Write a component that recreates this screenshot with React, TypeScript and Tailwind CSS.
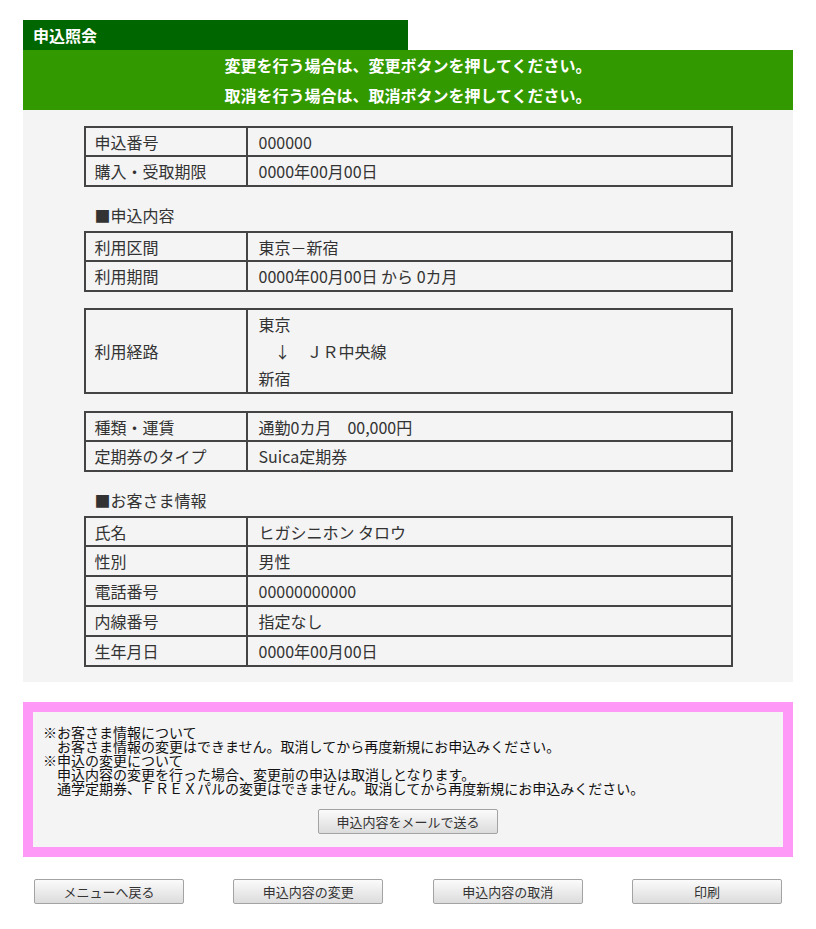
const jp = "font-['Noto_Sans_CJK_JP','Noto_Sans',sans-serif]"

type Row = { label: string; value: React.ReactNode }

function InfoTable({ rows }: { rows: Row[] }) {
  return (
    <div className="w-[649px] mx-auto border-2 border-[#444]">
      {rows.map((r, i) => (
        <div key={i} className={i > 0 ? "flex min-h-[30px] border-t-2 border-[#444]" : "flex min-h-[27px]"}>
          <div className="w-[162px] shrink-0 flex items-center pl-[9px] border-r-2 border-[#444]">{r.label}</div>
          <div className="flex-1 flex flex-col justify-center pl-[11px]">{r.value}</div>
        </div>
      ))}
    </div>
  )
}

function Heading({ children }: { children: React.ReactNode }) {
  return <div className="w-[649px] mx-auto pl-[11px] pt-[14px] h-[44px] leading-[29px]">{children}</div>
}

function Btn({ children, className = "" }: { children: React.ReactNode; className?: string }) {
  return (
    <button
      className={`h-[25px] rounded-[2px] border border-[#a3a3a3] bg-gradient-to-b from-[#fbfbfb] to-[#dcdcdc] text-[13px] leading-[23px] text-[#333] ${jp} ${className}`}
    >
      {children}
    </button>
  )
}

export default function App() {
  return (
    <div className={`min-h-[929px] bg-white ${jp}`}>
      <div className="w-[770px] mx-auto pt-[20px]">
        <div className="w-[385px] h-[30px] bg-[#006600] text-white font-bold text-[16px] leading-[30px] pl-[10px]">
          申込照会
        </div>
        <div className="h-[60px] bg-[#339900] text-white font-bold text-[16px] leading-[30px] text-center">
          <div>変更を行う場合は、変更ボタンを押してください。</div>
          <div>取消を行う場合は、取消ボタンを押してください。</div>
        </div>

        <div className="bg-[#f4f4f4] pt-[16px] pb-[15px] text-[16px] text-[#333]">
          <InfoTable
            rows={[
              { label: "申込番号", value: "000000" },
              { label: "購入・受取期限", value: "0000年00月00日" },
            ]}
          />

          <Heading>■申込内容</Heading>
          <InfoTable
            rows={[
              { label: "利用区間", value: "東京－新宿" },
              { label: "利用期間", value: "0000年00月00日 から 0カ月" },
            ]}
          />

          <div className="h-[16px]" />
          <InfoTable
            rows={[
              {
                label: "利用経路",
                value: (
                  <div className="leading-[27px] py-[0.5px] whitespace-pre">
                    <div>東京</div>
                    <div>{"　↓　ＪＲ中央線"}</div>
                    <div>新宿</div>
                  </div>
                ),
              },
            ]}
          />

          <div className="h-[17px]" />
          <InfoTable
            rows={[
              { label: "種類・運賃", value: <span className="whitespace-pre">{"通勤0カ月　00,000円"}</span> },
              { label: "定期券のタイプ", value: "Suica定期券" },
            ]}
          />

          <Heading>■お客さま情報</Heading>
          <InfoTable
            rows={[
              { label: "氏名", value: "ヒガシニホン タロウ" },
              { label: "性別", value: "男性" },
              { label: "電話番号", value: "00000000000" },
              { label: "内線番号", value: "指定なし" },
              { label: "生年月日", value: "0000年00月00日" },
            ]}
          />
        </div>

        <div className="mt-[20px] border-[10px] border-[#ff99f8] bg-[#f4f4f4] pt-[13px] pb-[13px]">
          <div className="pl-[10px] text-[14px] leading-[14px] text-[#111] whitespace-pre">
            <div>※お客さま情報について</div>
            <div>{"　お客さま情報の変更はできません。取消してから再度新規にお申込みください。"}</div>
            <div>※申込の変更について</div>
            <div>{"　申込内容の変更を行った場合、変更前の申込は取消しとなります。"}</div>
            <div>{"　通学定期券、ＦＲＥＸパルの変更はできません。取消してから再度新規にお申込みください。"}</div>
          </div>
          <div className="flex justify-center mt-[14px]">
            <Btn className="w-[180px]">申込内容をメールで送る</Btn>
          </div>
        </div>

        <div className="flex justify-between px-[11px] mt-[22px]">
          <Btn className="w-[150px]">メニューへ戻る</Btn>
          <Btn className="w-[150px]">申込内容の変更</Btn>
          <Btn className="w-[150px]">申込内容の取消</Btn>
          <Btn className="w-[150px]">印刷</Btn>
        </div>
      </div>
    </div>
  )
}
